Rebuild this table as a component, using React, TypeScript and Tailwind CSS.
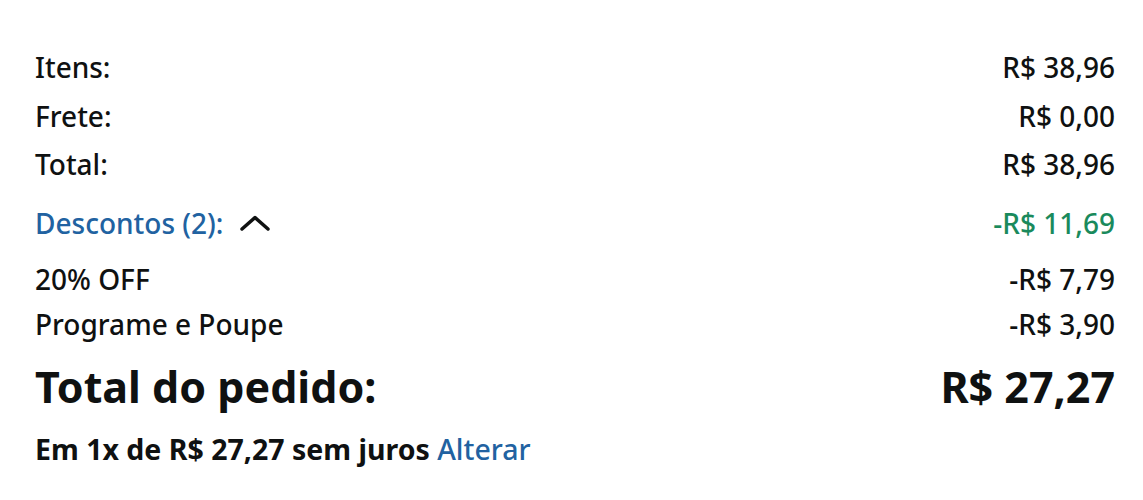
import React from "react";

function Row({ label, value, className = "" }: { label: React.ReactNode; value: React.ReactNode; className?: string }) {
  return (
    <div className={`flex items-baseline justify-between ${className}`}>
      <span>{label}</span>
      <span>{value}</span>
    </div>
  );
}

export default function App() {
  return (
    <div
      className="w-[1143px] h-[500px] bg-white text-[#0f1111] pl-[35px] pr-[28px] pt-[43px] font-medium"
      style={{ fontFamily: '"Noto Sans", "Open Sans", sans-serif' }}
    >
      <div className="text-[28px] leading-[48.5px]">
        <Row label="Itens:" value="R$ 38,96" />
        <Row label="Frete:" value="R$ 0,00" />
        <Row label="Total:" value="R$ 38,96" />
      </div>
      <div className="mt-[10px] flex items-center justify-between text-[28px] leading-[48px]">
        <span className="flex items-center gap-[16px] text-[#2162a1]">
          Descontos (2):
          <svg width="32" height="18" viewBox="0 0 32 18" fill="none">
            <path d="M3 15 L16 3.5 L29 15" stroke="#0f1111" strokeWidth="3.5" strokeLinecap="round" strokeLinejoin="round" />
          </svg>
        </span>
        <span className="text-[#1a8a5c]">-R$ 11,69</span>
      </div>
      <div className="mt-[10px] text-[28px] leading-[45px]">
        <Row label="20% OFF" value="-R$ 7,79" />
        <Row label="Programe e Poupe" value="-R$ 3,90" />
      </div>
      <div className="mt-[10px] text-[43px] leading-[60px] font-bold">
        <Row label="Total do pedido:" value="R$ 27,27" />
      </div>
      <div className="mt-[10px] text-[28.5px] leading-[44px]">
        <span className="font-bold">Em 1x de R$ 27,27 sem juros</span>{" "}
        <span className="text-[#2162a1]">Alterar</span>
      </div>
    </div>
  );
}
